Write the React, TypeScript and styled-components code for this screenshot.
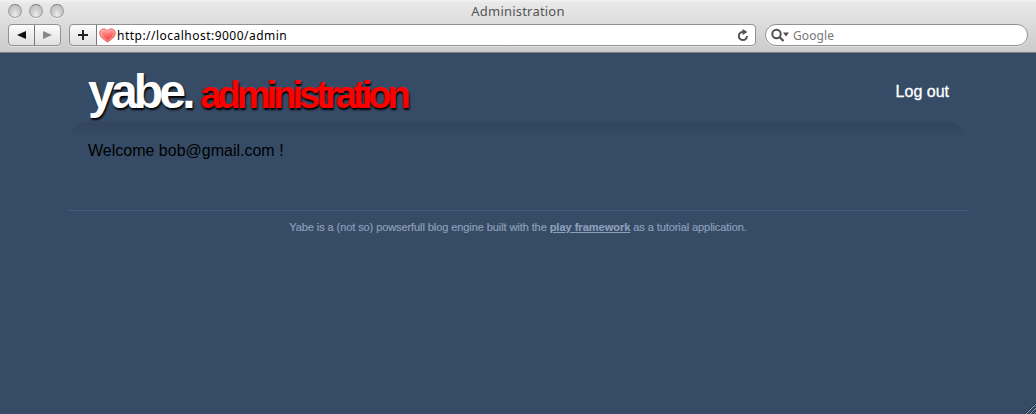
import React from "react";
import styled, { createGlobalStyle } from "styled-components";

const GlobalStyle = createGlobalStyle`
  * { box-sizing: border-box; }
  html, body { margin: 0; background: #364b66; overflow: hidden; }
`;

const Window = styled.div`
  position: relative;
  display: flex;
  flex-direction: column;
  width: 1036px;
  height: 414px;
  background: #364b66;
  font-family: "Liberation Sans", Arial, sans-serif;
  white-space: nowrap;
`;

const Chrome = styled.header`
  height: 53px;
  flex: none;
  background: linear-gradient(#f2f2f2 0, #e8e8e8 3px, #cbcbcb 52px);
  border-bottom: 1px solid #80807c;
  font-family: "Noto Sans", "Open Sans", sans-serif;
`;

const TitleBar = styled.div`
  display: grid;
  grid-template-columns: 100px 1fr 100px;
  height: 24px;
`;

const Lights = styled.div`
  display: flex;
  gap: 7px;
  padding: 4px 0 0 8px;
`;

const Light = styled.span`
  width: 14px;
  height: 14px;
  border-radius: 50%;
  border: 1px solid #a0a0a0;
  border-top-color: #808080;
  background: radial-gradient(ellipse at 50% 85%, #eee 0, #cfcfcf 45%, #b4b4b4 100%);
  box-shadow: 0 1px 0 #f4f4f4;
`;

const Title = styled.div`
  text-align: center;
  font-size: 13px;
  line-height: 22px;
  letter-spacing: 0.2px;
  color: #555;
`;

const Toolbar = styled.div`
  display: flex;
  height: 22px;
  padding: 0 8px;
`;

const ButtonGroup = styled.div`
  display: flex;
  width: 53px;
  height: 22px;
  margin-right: 8px;
  border: 1px solid #929292;
  border-radius: 4px;
  background: linear-gradient(#fcfcfc, #e0e0e0);
  box-shadow: 0 1px 0 #e2e2e2;
`;

const ToolButton = styled.button<{ $width: number; $divided?: boolean }>`
  display: flex;
  align-items: center;
  justify-content: center;
  width: ${(p) => p.$width}px;
  padding: 0;
  border: 0;
  border-right: ${(p) => (p.$divided ? "1px solid #777" : "0")};
  background: none;
`;

const AddressBar = styled.div`
  display: flex;
  width: 687px;
  height: 22px;
  margin-right: 9px;
  border: 1px solid #929292;
  border-radius: 4px;
  background: linear-gradient(90deg, transparent 27px, #fff 27px), linear-gradient(#fcfcfc, #e0e0e0);
  box-shadow: 0 1px 0 #e2e2e2;
`;

const Url = styled.div`
  display: flex;
  flex: 1;
  align-items: center;
  padding: 0 6px 0 2px;
`;

const UrlText = styled.span`
  flex: 1;
  margin-left: 1px;
  padding-top: 2px;
  font-size: 12px;
  line-height: 20px;
  letter-spacing: 0.48px;
  color: #000;
`;

const Search = styled.div`
  display: flex;
  align-items: center;
  flex: 1;
  height: 22px;
  padding-left: 5px;
  border: 1px solid #929292;
  border-radius: 11px;
  background: #fff;
  box-shadow: 0 1px 0 #e2e2e2;
`;

const SearchText = styled.span`
  margin-left: 4px;
  padding-top: 2px;
  font-size: 12px;
  line-height: 20px;
  letter-spacing: 0.1px;
  color: #777;
`;

const Page = styled.div`
  width: 900px;
  margin: 0 auto;
`;

const Header = styled.div`
  display: flex;
  justify-content: space-between;
  height: 69px;
  padding: 0 19px 0 20px;
`;

const Logo = styled.h1`
  display: flex;
  align-items: baseline;
  margin: 0;
  font-size: 48px;
  line-height: 77px;
  letter-spacing: -3.8px;
  color: #fff;
  text-shadow: 1px 2px 2px #000;
`;

const Section = styled.span`
  margin-left: 8.5px;
  font-size: 38px;
  letter-spacing: -3.95px;
  color: #f00;
`;

const LogOut = styled.a`
  padding-top: 29px;
  font-size: 16px;
  line-height: 20px;
  color: #fff;
  -webkit-text-stroke: 0.3px #fff;
`;

const Main = styled.main`
  height: 88px;
  padding: 19px 20px;
  border-radius: 20px 20px 0 0;
  background: linear-gradient(#31455f, #364b66 16px);
  font-size: 16px;
  line-height: 20px;
  color: #000;
`;

const Footer = styled.footer`
  border-top: 1px solid #435a78;
  padding-top: 9px;
  text-align: center;
  font-size: 11px;
  line-height: 15px;
  letter-spacing: -0.085px;
  color: #8c9fb8;
  -webkit-text-stroke: 0.2px #8c9fb8;
`;

const FooterLink = styled.a`
  font-weight: bold;
  letter-spacing: 0;
  text-decoration: underline;
`;

const Grip = styled.svg`
  position: absolute;
  right: 0;
  bottom: 0;
`;

export default function App() {
  return (
    <Window>
      <GlobalStyle />
      <Chrome>
        <TitleBar>
          <Lights><Light /><Light /><Light /></Lights>
          <Title><span>Administration</span></Title>
        </TitleBar>
        <Toolbar>
          <ButtonGroup>
            <ToolButton $width={26} $divided aria-label="Back">
              <svg width="9" height="8"><path d="M9 0v8L0 4z" fill="#111" /></svg>
            </ToolButton>
            <ToolButton $width={25} aria-label="Forward">
              <svg width="9" height="8"><path d="M0 0v8l9-4z" fill="#888" /></svg>
            </ToolButton>
          </ButtonGroup>
          <AddressBar>
            <ToolButton $width={27} $divided aria-label="Add bookmark">
              <svg width="10" height="10"><path d="M0 5h10M5 0v10" stroke="#222" strokeWidth="2" /></svg>
            </ToolButton>
            <Url>
              <svg width="17" height="15" viewBox="0 0 17 15">
                <defs>
                  <linearGradient id="heart" x1="0" y1="0" x2="0.3" y2="1">
                    <stop offset="0" stopColor="#ffb0ae" />
                    <stop offset="0.5" stopColor="#ff7775" />
                    <stop offset="1" stopColor="#f33b3c" />
                  </linearGradient>
                </defs>
                <path d="M8.5 14C5 11.5.7 9 .7 5 .7.4 6.300-.3 8.500 2.700 10.700-.3 16.300.4 16.300 5c0 4-4.300 6.500-7.800 9z" fill="url(#heart)" stroke="#e26a68" />
                <path d="M8.500 12.600C5 10 1.900 8 1.900 5c0-3.300 4.800-3.500 6.600-.5C10.300 1.500 15.100 1.700 15.100 5c0 3-3.100 5-6.600 7.600z" fill="none" stroke="#ffc2c0" strokeWidth=".7" />
              </svg>
              <UrlText><span>http://localhost:9000/admin</span></UrlText>
              <svg width="12" height="13" viewBox="0 0 12 13">
                <path d="M6.500 2.900A4.100 4.100 0 1 0 10 7" fill="none" stroke="#505050" strokeWidth="1.900" />
                <path d="M5.500 0v6L10.500 3z" fill="#505050" />
              </svg>
            </Url>
          </AddressBar>
          <Search>
            <svg width="18" height="14" viewBox="0 0 18 14">
              <circle cx="5.500" cy="6" r="4.200" fill="none" stroke="#505050" strokeWidth="2" />
              <path d="M8.500 9l4 4" stroke="#505050" strokeWidth="2.300" />
              <path d="M12 4.500h6l-3 4z" fill="#505050" />
            </svg>
            <SearchText>Google</SearchText>
          </Search>
        </Toolbar>
      </Chrome>
      <Page>
        <Header>
          <Logo><span>yabe.</span><Section>administration</Section></Logo>
          <LogOut>Log out</LogOut>
        </Header>
        <Main><span>Welcome bob@gmail.com !</span></Main>
        <Footer>
          <span>Yabe is a (not so) powserfull blog engine built with the <FooterLink>play framework</FooterLink> as a tutorial application.</span>
        </Footer>
      </Page>
      <Grip width="11" height="11" viewBox="0 0 11 11">
        <path d="M1 11L11 1M5 11l6-6M9 11l2-2" stroke="#b4bcc6" strokeWidth="1" strokeDasharray="1.100 .3" />
        <path d="M0 11L11 0M4 11l7-7M8 11l3-3" stroke="#1d2a3b" strokeWidth=".7" />
      </Grip>
    </Window>
  );
}
